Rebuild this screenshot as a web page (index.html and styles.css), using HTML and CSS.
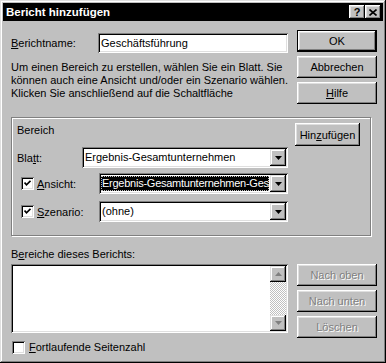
FILE: index.html
```html
<!DOCTYPE html>
<html lang="de">
<head>
    <meta charset="UTF-8">
    <title>Bericht hinzufügen</title>
    <link rel="stylesheet" href="styles.css">
</head>
<body>
    <div class="window">
        <div class="titlebar">
            <span class="title">Bericht hinzufügen</span>
            <div class="title-buttons">
                <span class="tbtn">?</span>
                <span class="tbtn">
                    <svg width="8" height="7" viewBox="0 0 8 7"><path d="M0.5 0.5 L7.5 6.5 M7.5 0.5 L0.5 6.5" stroke="#000" stroke-width="1.6" fill="none"/></svg>
                </span>
            </div>
        </div>

        <div class="content">
            <div class="top">
                <div class="main">
                    <div class="name-row">
                        <span class="name-label"><u>B</u>erichtname:</span>
                        <div class="field name-field">Geschäftsführung</div>
                    </div>
                    <p class="hint">Um einen Bereich zu erstellen, wählen Sie ein Blatt. Sie<br>können auch eine Ansicht und/oder ein Szenario wählen.<br>Klicken Sie anschließend auf die Schaltfläche</p>
                </div>
                <div class="side">
                    <button class="btn default">OK</button>
                    <button class="btn">Abbrechen</button>
                    <button class="btn"><u>H</u>ilfe</button>
                </div>
            </div>

            <div class="group">
                <div class="group-head">
                    <span class="group-title">Bereich</span>
                    <button class="btn add-btn">Hin<u>z</u>ufügen</button>
                </div>
                <div class="row row-blatt">
                    <span class="row-label">Bla<u>t</u>t:</span>
                    <div class="combo combo-wide">
                        <span class="combo-text">Ergebnis-Gesamtunternehmen</span>
                        <span class="combo-btn"><svg width="7" height="4" viewBox="0 0 7 4"><path d="M0 0 H7 L3.5 4 Z" fill="#000"/></svg></span>
                    </div>
                </div>
                <div class="row row-ansicht">
                    <span class="check"><svg width="7" height="7" viewBox="0 0 7 7"><path d="M0.5 2.5 L2.5 4.8 L6.5 0.8" stroke="#000" stroke-width="1.7" fill="none"/></svg></span>
                    <span class="row-label check-label"><u>A</u>nsicht:</span>
                    <div class="combo">
                        <span class="combo-text selected">Ergebnis-Gesamtunternehmen-Ges</span>
                        <span class="combo-btn"><svg width="7" height="4" viewBox="0 0 7 4"><path d="M0 0 H7 L3.5 4 Z" fill="#000"/></svg></span>
                    </div>
                </div>
                <div class="row row-szenario">
                    <span class="check"><svg width="7" height="7" viewBox="0 0 7 7"><path d="M0.5 2.5 L2.5 4.8 L6.5 0.8" stroke="#000" stroke-width="1.7" fill="none"/></svg></span>
                    <span class="row-label check-label"><u>S</u>zenario:</span>
                    <div class="combo">
                        <span class="combo-text">(ohne)</span>
                        <span class="combo-btn"><svg width="7" height="4" viewBox="0 0 7 4"><path d="M0 0 H7 L3.5 4 Z" fill="#000"/></svg></span>
                    </div>
                </div>
            </div>

            <div class="bottom">
                <div class="main">
                    <span class="list-label">B<u>e</u>reiche dieses Berichts:</span>
                    <div class="listbox">
                        <div class="list-area"></div>
                        <div class="scrollbar">
                            <span class="sb-btn"><svg width="7" height="4" viewBox="0 0 7 4"><path d="M3.5 0 L7 4 H0 Z" fill="#808080"/></svg></span>
                            <span class="sb-track"></span>
                            <span class="sb-btn"><svg width="7" height="4" viewBox="0 0 7 4"><path d="M0 0 H7 L3.5 4 Z" fill="#808080"/></svg></span>
                        </div>
                    </div>
                    <div class="page-row">
                        <span class="check"></span>
                        <span class="page-label"><u>F</u>ortlaufende Seitenzahl</span>
                    </div>
                </div>
                <div class="side side-list">
                    <button class="btn disabled">Nach oben</button>
                    <button class="btn disabled">Nach unten</button>
                    <button class="btn disabled">Löschen</button>
                </div>
            </div>
        </div>
    </div>
</body>
</html>
```

FILE: styles.css
```css
* {
    margin: 0;
    padding: 0;
    box-sizing: border-box;
}

body {
    width: 386px;
    height: 363px;
    background: #c0c0c0;
    font-family: "Liberation Sans", Arial, sans-serif;
    font-size: 11px;
    color: #000;
    overflow: hidden;
}

u {
    text-decoration: underline;
    text-underline-offset: 1px;
}

.window {
    width: 386px;
    height: 363px;
    padding: 3px;
    background: #c0c0c0;
    box-shadow: inset -1px -1px #000, inset 1px 1px #dfdfdf,
                inset -2px -2px #808080, inset 2px 2px #fff;
    display: flex;
    flex-direction: column;
}

.titlebar {
    height: 18px;
    background: #000;
    color: #fff;
    display: flex;
    align-items: center;
    justify-content: space-between;
    padding: 0 2px 0 3px;
}

.title {
    font-weight: bold;
    font-size: 11.5px;
}

.title-buttons {
    display: flex;
}

.tbtn {
    width: 16px;
    height: 14px;
    background: #c0c0c0;
    color: #000;
    font-weight: bold;
    font-size: 11px;
    line-height: 14px;
    display: flex;
    align-items: center;
    justify-content: center;
    box-shadow: inset -1px -1px #000, inset 1px 1px #fff,
                inset -2px -2px #808080, inset 2px 2px #dfdfdf;
}

.content {
    padding: 9px 6px 0 8px;
    display: flex;
    flex-direction: column;
}

.top,
.bottom {
    display: flex;
    gap: 9px;
}

.main {
    width: 277px;
    display: flex;
    flex-direction: column;
}

.side {
    width: 80px;
    display: flex;
    flex-direction: column;
    gap: 4px;
}

.btn {
    width: 80px;
    height: 22px;
    background: #c0c0c0;
    border: none;
    font-family: inherit;
    font-size: 11px;
    color: #000;
    box-shadow: inset -1px -1px #000, inset 1px 1px #fff,
                inset -2px -2px #808080, inset 2px 2px #dfdfdf;
}

.btn.default {
    box-shadow: inset 0 0 0 1px #000, inset -2px -2px #000, inset 2px 2px #fff,
                inset -3px -3px #808080, inset 3px 3px #dfdfdf;
}

.btn.disabled {
    color: #808080;
    text-shadow: 1px 1px 0 #fff;
}

.field,
.combo,
.listbox,
.check {
    background: #fff;
    box-shadow: inset 1px 1px #808080, inset -1px -1px #fff,
                inset 2px 2px #000, inset -2px -2px #dfdfdf;
}

.name-row {
    display: flex;
    align-items: center;
    margin-top: 3px;
}

.name-label {
    width: 87px;
}

.name-field {
    width: 190px;
    height: 20px;
    padding-left: 3px;
    line-height: 20px;
}

.hint {
    margin-top: 8px;
    line-height: 13px;
    white-space: nowrap;
}

.group {
    margin-top: 13px;
    width: 360px;
    border: 1px solid #808080;
    box-shadow: inset 1px 1px #fff, 1px 1px #fff;
    padding: 5px 10px 13px 5px;
}

.group-head {
    display: flex;
    justify-content: space-between;
    align-items: flex-start;
}

.group-title {
    margin-top: 1px;
    line-height: 13px;
}

.add-btn {
    width: 65px;
    height: 23px;
}

.row {
    width: 271px;
    display: flex;
    align-items: center;
}

.row-blatt {
    margin-top: 1px;
}

.row-ansicht {
    margin-top: 5px;
}

.row-szenario {
    margin-top: 7px;
}

.check {
    width: 13px;
    height: 13px;
    display: flex;
    align-items: center;
    justify-content: center;
    flex-shrink: 0;
}

.row .check {
    margin-left: 4px;
}

.check-label {
    margin-left: 3px;
}

.combo {
    width: 189px;
    height: 21px;
    margin-left: auto;
    padding: 2px;
    display: flex;
}

.combo-wide {
    width: 206px;
}

.combo-text {
    flex: 1;
    min-width: 0;
    padding-left: 1px;
    line-height: 17px;
    white-space: nowrap;
    overflow: hidden;
}

.combo-text.selected {
    margin: 1px 1px 1px 0;
    line-height: 15px;
    letter-spacing: -0.25px;
    background: #000;
    color: #fff;
    outline: 1px dotted #c0c0c0;
    outline-offset: -1px;
}

.combo-btn {
    width: 16px;
    height: 17px;
    background: #c0c0c0;
    display: flex;
    align-items: center;
    justify-content: center;
    box-shadow: inset -1px -1px #000, inset 1px 1px #dfdfdf,
                inset -2px -2px #808080, inset 2px 2px #fff;
}

.bottom {
    margin-top: 12px;
}

.list-label {
    line-height: 13px;
}

.listbox {
    margin-top: 3px;
    height: 69px;
    padding: 2px;
    display: flex;
}

.list-area {
    flex: 1;
}

.scrollbar {
    width: 16px;
    display: flex;
    flex-direction: column;
}

.sb-btn {
    height: 16px;
    background: #c0c0c0;
    display: flex;
    align-items: center;
    justify-content: center;
    box-shadow: inset -1px -1px #000, inset 1px 1px #dfdfdf,
                inset -2px -2px #808080, inset 2px 2px #fff;
}

.sb-track {
    flex: 1;
    background-image: repeating-conic-gradient(#fff 0 25%, #c0c0c0 0 50%);
    background-size: 2px 2px;
}

.page-row {
    margin-top: 8px;
    display: flex;
    align-items: center;
}

.page-row .check {
    margin-left: 1px;
}

.page-label {
    margin-left: 4px;
    line-height: 13px;
}

.side-list {
    padding-top: 16px;
}
```
